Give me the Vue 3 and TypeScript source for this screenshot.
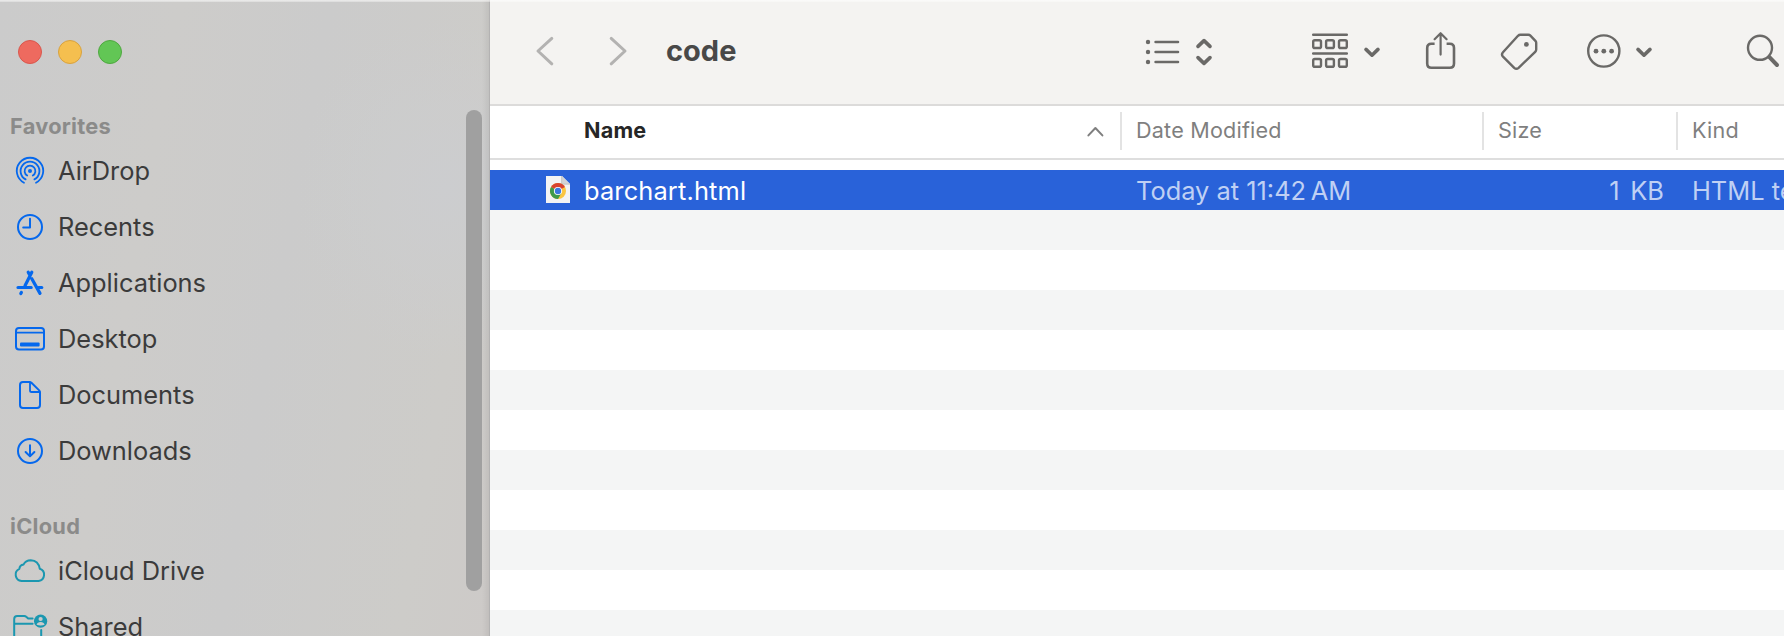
<script setup lang="ts">
interface Place {
  label: string
  icon: string
}

const favorites: Place[] = [
  { label: 'AirDrop', icon: 'airdrop' },
  { label: 'Recents', icon: 'recents' },
  { label: 'Applications', icon: 'apps' },
  { label: 'Desktop', icon: 'desktop' },
  { label: 'Documents', icon: 'doc' },
  { label: 'Downloads', icon: 'down' },
]
const cloud: Place[] = [
  { label: 'iCloud Drive', icon: 'cloud' },
  { label: 'Shared', icon: 'shared' },
]
const sections = [
  { title: 'Favorites', cls: 'fav', items: favorites },
  { title: 'iCloud', cls: 'icl', items: cloud },
]
const files = [
  { name: 'barchart.html', modified: 'Today at 11:42\u2009AM', size: '1 KB', kind: 'HTML text' },
]
const emptyRows = 11
</script>

<template>
  <div class="window">
    <aside class="sidebar">
      <div class="lights">
        <span class="light red"></span>
        <span class="light yellow"></span>
        <span class="light green"></span>
      </div>
      <section v-for="s in sections" :key="s.title" :class="['group', s.cls]">
        <h2 class="group-title">{{ s.title }}</h2>
        <div v-for="p in s.items" :key="p.label" class="place">
          <svg class="place-icon" width="36" height="36" viewBox="0 0 36 36" fill="none" stroke="currentColor" stroke-width="2" stroke-linecap="round" stroke-linejoin="round" :class="{ teal: s.cls === 'icl' }">
            <template v-if="p.icon === 'airdrop'">
              <circle cx="18" cy="18" r="2" fill="currentColor" stroke="none" />
              <path d="M15.2 22.6a5.4 5.4 0 1 1 5.6 0" stroke-width="1.8" />
              <path d="M13.6 26.4a9.4 9.4 0 1 1 8.8 0" stroke-width="1.8" />
              <path d="M12 29.7a13.2 13.2 0 1 1 12 0" stroke-width="1.8" />
            </template>
            <template v-else-if="p.icon === 'recents'">
              <circle cx="18" cy="18" r="12" />
              <path d="M18 9.8V18.4H11.2" />
            </template>
            <template v-else-if="p.icon === 'apps'">
              <path d="M19.8 7.2L13 20.8M16.2 7.2L17.6 9.8M19.8 13.8L28 28.4" stroke-width="3.2" />
              <path d="M6 22.5H19.2M26.6 22.5H29.8M9.4 27.4L8.8 28.5" stroke-width="3.2" />
            </template>
            <template v-else-if="p.icon === 'desktop'">
              <rect x="4" y="7" width="28" height="21.6" rx="3" />
              <path d="M4 11.6H32" stroke-width="1.6" />
              <rect x="8" y="21.4" width="19.6" height="4.2" rx="1" fill="currentColor" stroke="none" />
            </template>
            <template v-else-if="p.icon === 'doc'">
              <path d="M11 5H17.4Q18.6 5 19.4 5.8L27.2 13.4Q28 14.2 28 15.4V28Q28 31 25 31H11Q8 31 8 28V8Q8 5 11 5Z" />
              <path d="M18 5.4V13.4Q18 15 19.6 15H27.6" stroke-width="1.8" />
            </template>
            <template v-else-if="p.icon === 'down'">
              <circle cx="18" cy="18" r="12" />
              <path d="M18 12.2V23.2M13.6 19L18 23.4L22.4 19" />
            </template>
            <template v-else-if="p.icon === 'cloud'">
              <path d="M9.6 28A6.4 6.4 0 0 1 7.4 15.8Q7.6 12 11.6 11.4Q13.6 7.2 18.8 7.2Q26.4 7.4 27.8 15.8A6.3 6.3 0 0 1 26.6 28Z" />
            </template>
            <template v-else>
              <path d="M20.6 9.6H16.2L14.2 7.8Q13.4 7 12.2 7H5.2Q2.2 7 2.2 10V28M2.2 14.8H20.6M29.2 21V28" />
              <circle cx="28.6" cy="12.2" r="6.6" fill="currentColor" stroke="none" />
              <circle class="cut" cx="28.6" cy="10" r="2.1" />
              <path class="cut" d="M24.6 15.8Q25.4 13 28.6 13Q31.8 13 32.6 15.8Q28.6 17.2 24.6 15.8Z" />
            </template>
          </svg>
          <span class="place-label">{{ p.label }}</span>
        </div>
      </section>
      <div class="scroll-thumb"></div>
    </aside>

    <main class="content">
      <header class="toolbar">
        <svg class="nav" width="120" height="40" viewBox="0 0 120 40" fill="none" stroke="#b3b2b1" stroke-width="3" stroke-linecap="round" stroke-linejoin="round">
          <path d="M21.8 8.4L8 21L21.8 33.8" />
          <path d="M81.2 8.4L95 21L81.2 33.8" />
        </svg>
        <h1 class="title">code</h1>
        <svg class="tools" width="644" height="60" viewBox="1140 21 644 60" fill="none" stroke="#6a6967" stroke-width="2.6" stroke-linecap="round" stroke-linejoin="round">
          <g fill="#6a6967" stroke="none">
            <circle cx="1148" cy="42" r="2.2" /><circle cx="1148" cy="52" r="2.2" /><circle cx="1148" cy="62" r="2.2" />
          </g>
          <path d="M1155.6 42H1178M1155.6 52H1178M1155.6 62H1178" />
          <path d="M1198 46.4L1204 40.6L1210 46.4M1198 57.6L1204 63.4L1210 57.6" stroke-width="3.6" />
          <path d="M1313.2 34.7H1346.8M1313.2 53.4H1346.8" stroke-width="2.5" />
          <g stroke-width="2.4">
            <rect x="1313.2" y="40.2" width="7.8" height="7.8" rx="1.6" /><rect x="1326.1" y="40.2" width="7.8" height="7.8" rx="1.6" /><rect x="1339" y="40.2" width="7.8" height="7.8" rx="1.6" />
            <rect x="1313.2" y="59" width="7.8" height="7.8" rx="1.6" /><rect x="1326.1" y="59" width="7.8" height="7.8" rx="1.6" /><rect x="1339" y="59" width="7.8" height="7.8" rx="1.6" />
          </g>
          <path d="M1366 49.4L1372 55.2L1378 49.4" stroke-width="3.6" />
          <path d="M1434.6 43.8H1431.4Q1427.2 43.8 1427.2 48V63.6Q1427.2 67.8 1431.4 67.8H1449.8Q1454 67.8 1454 63.6V48Q1454 43.8 1449.8 43.8H1446.6" stroke-linecap="butt" />
          <path d="M1440.6 54.6V33.6M1434.6 39.2L1440.6 33.2L1446.6 39.2" stroke-width="2.2" />
          <path d="M1520.4 34.8H1528.4Q1529.6 34.8 1530.4 35.6L1535.4 40.8Q1536.2 41.6 1536.2 42.8V49.4Q1536.2 50.8 1535.2 51.8L1518.6 67.8Q1516.4 69.8 1514.2 67.8L1503 56.6Q1501 54.4 1503 52.2L1518 35.8Q1519 34.8 1520.4 34.8Z" stroke-width="2.4" />
          <circle cx="1526.4" cy="44.4" r="2.4" fill="#6a6967" stroke="none" />
          <circle cx="1603.8" cy="51" r="15.6" stroke-width="2.4" />
          <g fill="#6a6967" stroke="none">
            <circle cx="1596" cy="51.2" r="2.4" /><circle cx="1603.8" cy="51.2" r="2.4" /><circle cx="1611.6" cy="51.2" r="2.4" />
          </g>
          <path d="M1638 49.4L1644 55.2L1650 49.4" stroke-width="3.6" />
          <circle cx="1760" cy="47.8" r="12" stroke-width="2.4" />
          <path d="M1769.4 57.2L1777 65" stroke-width="4" />
        </svg>
      </header>
      <div class="columns">
        <div class="col name">
          <span>Name</span>
          <svg class="sort" width="18" height="12" viewBox="0 0 18 12" fill="none" stroke="#7f7f7f" stroke-width="2" stroke-linecap="round" stroke-linejoin="round"><path d="M2.4 9.4L9.4 2L16.4 9.4" /></svg>
        </div>
        <div class="col date"><span>Date Modified</span></div>
        <div class="col size"><span>Size</span></div>
        <div class="col kind"><span>Kind</span></div>
      </div>
      <div class="rows">
        <div v-for="f in files" :key="f.name" class="row selected">
          <div class="cell name">
            <svg class="file-icon" width="26" height="30" viewBox="0 0 26 30">
              <path d="M1 1H17L25 9V28H1Z" fill="#f3f3f3" />
              <path d="M17 1L25 9H17Z" fill="#d4d4d4" />
              <path d="M16.6 1V9.2H25" fill="none" stroke="#aaa" stroke-width="0.6" />
              <circle cx="13" cy="16" r="8" fill="#fbc540" />
              <path d="M13 16L6.07 12A8 8 0 0 1 19.93 12Z" fill="#d8432f" />
              <path d="M13 16L6.07 12A8 8 0 0 0 13 24L16.5 18Z" fill="#3f9a4c" />
              <circle cx="13" cy="16" r="4.1" fill="#fff" />
              <circle cx="13" cy="16" r="3.2" fill="#3b78e0" />
            </svg>
            <span class="file-name">{{ f.name }}</span>
          </div>
          <div class="cell date"><span>{{ f.modified }}</span></div>
          <div class="cell size"><span>{{ f.size }}</span></div>
          <div class="cell kind"><span>{{ f.kind }}</span></div>
        </div>
        <div v-for="n in emptyRows" :key="n" class="row"></div>
      </div>
    </main>
  </div>
</template>

<style>
body {
  margin: 0;
  overflow: hidden;
}
</style>

<style scoped>
.window {
  position: relative;
  display: flex;
  width: 1784px;
  height: 636px;
  overflow: hidden;
  font-family: Inter, "Liberation Sans", sans-serif;
  background: #fff;
}
.window::after {
  content: "";
  position: absolute;
  inset: 0 0 auto 0;
  height: 2px;
  background: linear-gradient(rgba(255, 255, 255, 0.65), rgba(255, 255, 255, 0.3));
}
.sidebar {
  position: relative;
  box-sizing: border-box;
  flex: none;
  width: 490px;
  height: 636px;
  overflow: hidden;
  border-right: 1px solid #b3b2b2;
  background:
    linear-gradient(90deg, transparent 482px, rgba(0, 0, 0, 0.06)),
    radial-gradient(ellipse 150px 170px at 445px 190px, #cccdcf, rgba(204, 205, 207, 0)),
    linear-gradient(100deg, #cbcbcb 0, #cdccca 30%, #cbcbcb 55%, #cdccc9 85%, #cdcac8 100%);
}
.lights {
  display: flex;
  gap: 16px;
  padding: 40px 0 0 18px;
}
.light {
  box-sizing: border-box;
  width: 24px;
  height: 24px;
  border-radius: 50%;
}
.red { background: #ee6a5f; border: 1px solid #d9574d; }
.yellow { background: #f5bf4f; border: 1px solid #d8a23f; }
.green { background: #62c655; border: 1px solid #4fa840; }
.group.fav { margin-top: 46px; }
.group.icl { margin-top: 31px; }
.group-title {
  height: 33px;
  margin: 0;
  padding-left: 10px;
  font-size: 21.8px;
  font-weight: 650;
  line-height: 32px;
  letter-spacing: 0.25px;
  color: #8b8b8a;
}
.place {
  display: flex;
  align-items: center;
  height: 56px;
}
.place-icon {
  flex: none;
  margin-left: 12px;
  color: #0568ed;
}
.teal { color: #1b97b0; }
.cut { fill: #cbcbcb; stroke: none; }
.place-label {
  margin-left: 10px;
  font-size: 25.4px;
  font-weight: 430;
  line-height: 56px;
  color: #3b3b3b;
  white-space: nowrap;
}
.scroll-thumb {
  position: absolute;
  left: 466px;
  top: 110px;
  width: 16px;
  height: 481px;
  border-radius: 8px;
  background: #a0a0a0;
}
.content {
  flex: 1;
  min-width: 0;
}
.toolbar {
  box-sizing: border-box;
  display: flex;
  align-items: center;
  height: 106px;
  padding-bottom: 2px;
  border-bottom: 2px solid #dcdbda;
  background: #f4f3f1;
}
.nav {
  flex: none;
  margin-left: 40px;
  margin-top: -2px;
}
.title {
  flex: 1;
  margin: 0 0 0 16px;
  font-size: 29px;
  font-weight: 650;
  line-height: 40px;
  color: #484848;
}
.tools { flex: none; }
.columns {
  box-sizing: border-box;
  display: flex;
  height: 54px;
  padding-top: 6px;
  border-bottom: 2px solid #dedede;
}
.col {
  box-sizing: border-box;
  display: flex;
  align-items: center;
  height: 38px;
  padding-bottom: 2px;
  padding-left: 14px;
  font-size: 21.6px;
  font-weight: 420;
  letter-spacing: 0.2px;
  color: #7f7f7f;
  white-space: nowrap;
}
.col + .col { border-left: 2px solid #e3e3e3; }
.name { flex: none; width: 630px; }
.date { flex: none; width: 362px; }
.size { flex: none; width: 194px; }
.kind { flex: none; width: 120px; }
.col.name {
  justify-content: space-between;
  padding-left: 94px;
  padding-right: 16px;
  font-weight: 650;
  color: #262626;
}
.sort { margin-top: 4px; }
.rows { padding-top: 10px; }
.row {
  display: flex;
  height: 40px;
}
.row:nth-child(even) { background: #f4f5f5; }
.row.selected { background: #2962d9; }
.cell {
  box-sizing: border-box;
  display: flex;
  align-items: center;
  padding-left: 16px;
  font-size: 25.4px;
  font-weight: 430;
  color: #bfd0f4;
  white-space: nowrap;
}
.cell.name {
  padding-left: 55px;
  color: #fff;
}
.file-icon {
  flex: none;
  margin-right: 13px;
}
.file-name { letter-spacing: 0.15px; }
.cell.size {
  justify-content: flex-end;
  padding-right: 12px;
  word-spacing: 3.5px;
}
</style>
